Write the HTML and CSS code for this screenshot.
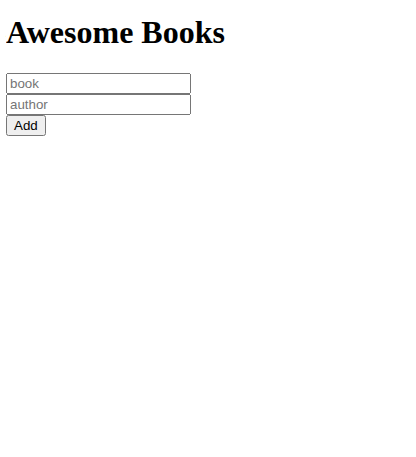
FILE: index.html
```html
<!DOCTYPE html>
<html>
<head>
<meta charset="utf-8">
<title>Awesome Books</title>
<link rel="stylesheet" href="styles.css">
</head>
<body>
<h1 class="title">Awesome Books</h1>
<form class="book-form">
<input type="text" class="field" placeholder="book">
<input type="text" class="field" placeholder="author">
<button type="button" class="add">Add</button>
</form>
</body>
</html>
```
FILE: styles.css
```css
body { font-family: "Liberation Serif", serif; margin: 6px; }
.title { font-family: "Liberation Serif", serif; margin-top: 8.44px; }
.book-form { display: flex; flex-direction: column; align-items: flex-start; }
.field, .add { font-family: "Liberation Sans", sans-serif; }
```
